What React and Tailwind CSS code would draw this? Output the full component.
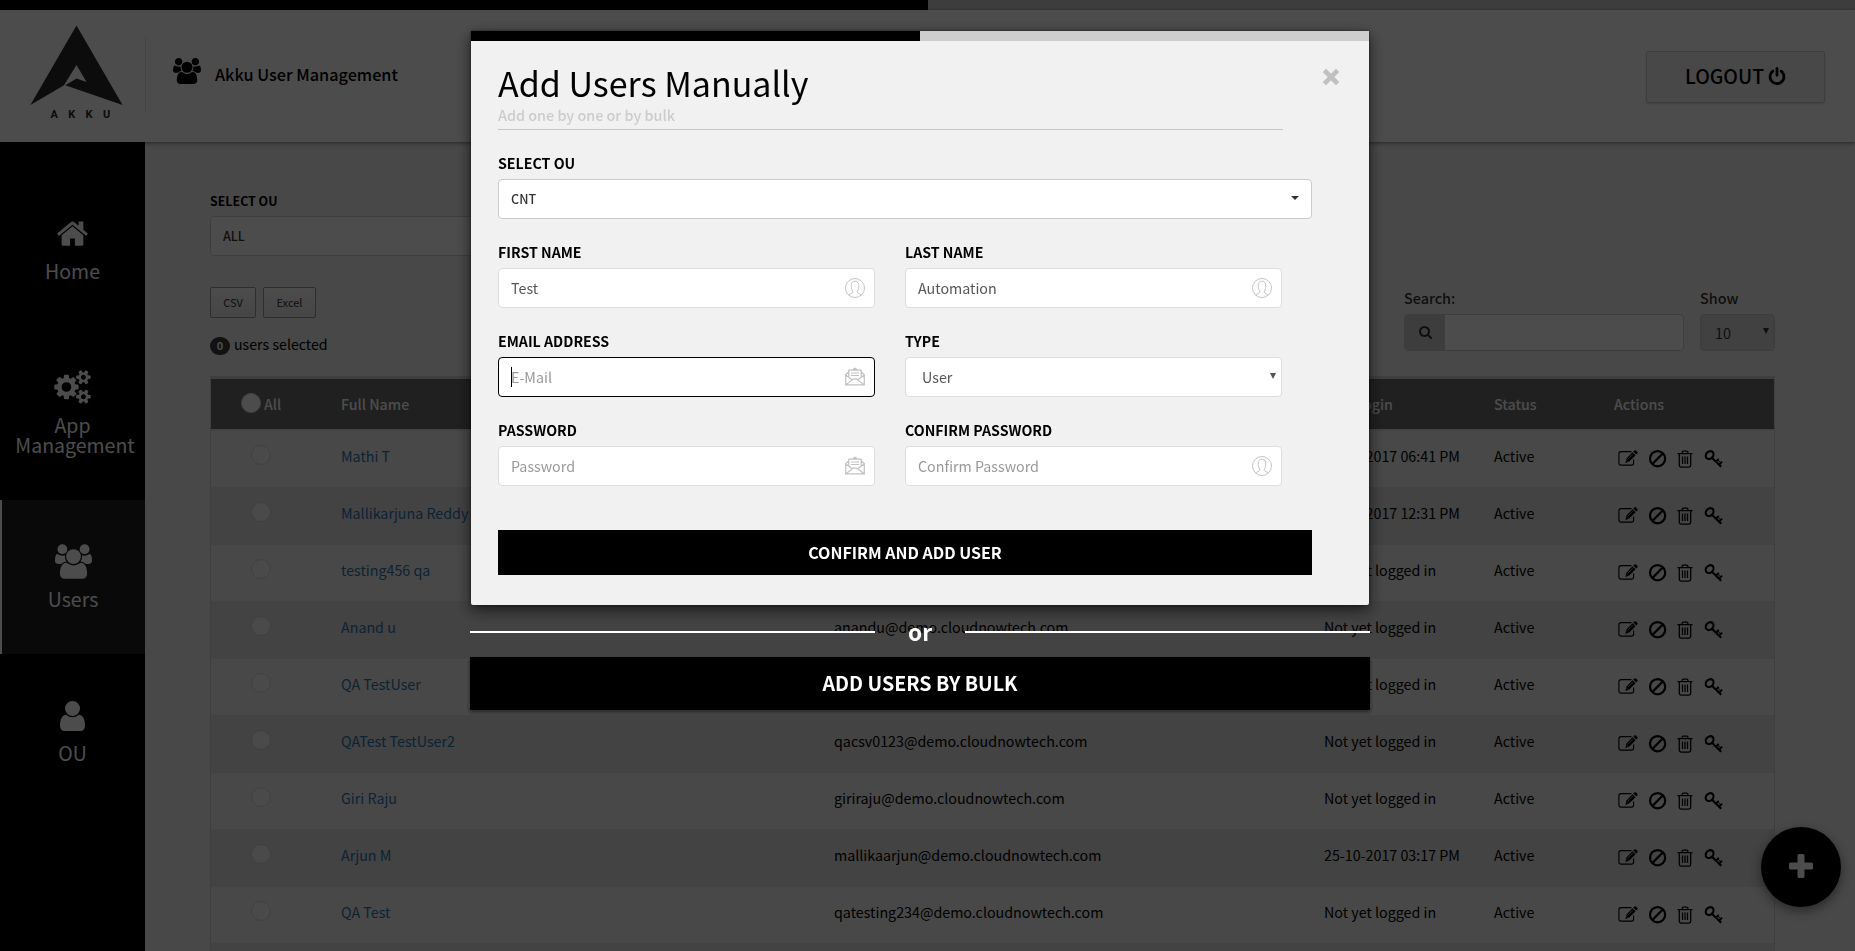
import React from "react";

const ICONS = {
  users: {
    box: "0 0 1920 1792",
    d: "M593 896q-162 5-265 128h-134q-82 0-138-40.5t-56-118.5q0-353 124-353 6 0 43.5 21t97.5 42.5 119 21.5q67 0 133-23-5 37-5 66 0 139 81 256zM1664 1533q0 120-73 189.5t-194 69.5h-874q-121 0-194-69.5t-73-189.5q0-53 3.5-103.5t14-109 26.5-108.5 43-97.5 62-81 85.5-53.5 111.5-20q10 0 43 21.5t73 48 107 48 135 21.5 135-21.5 107-48 73-48 43-21.5q61 0 111.5 20t85.5 53.5 62 81 43 97.5 26.5 108.5 14 109 3.5 103.5zM640 256q0 106-75 181t-181 75-181-75-75-181 75-181 181-75 181 75 75 181zM1344 640q0 159-112.5 271.5t-271.5 112.5-271.5-112.5-112.5-271.5 112.5-271.5 271.5-112.5 271.5 112.5 112.5 271.5zM1920 865q0 78-56 118.5t-138 40.5h-134q-103-123-265-128 81-117 81-256 0-29-5-66 66 23 133 23 59 0 119-21.5t97.5-42.5 43.5-21q124 0 124 353zM1792 256q0 106-75 181t-181 75-181-75-75-181 75-181 181-75 181 75 75 181z",
  },
  home: {
    box: "12 246 1640 1290",
    d: "M1408 992v480q0 26-19 45t-45 19h-384v-384h-256v384h-384q-26 0-45-19t-19-45v-480q0-1 .5-3t.5-3l575-474 575 474q1 2 1 6zm223-69l-62 74q-8 9-21 11h-3q-13 0-21-7l-692-577-692 577q-12 8-24 7-13-2-21-11l-62-74q-8-10-7-23.5t11-21.5l719-599q32-26 76-26t76 26l244 204v-195q0-14 9-23t23-9h192q14 0 23 9t9 23v408l219 182q10 8 11 21.5t-7 23.5z",
  },
  cogs: {
    box: "0 0 1920 1792",
    d: "M896 896q0-106-75-181t-181-75-181 75-75 181 75 181 181 75 181-75 75-181zm768 512q0-52-38-90t-90-38-90 38-38 90q0 53 37.5 90.5t90.5 37.5 90.5-37.5 37.5-90.5zm0-1024q0-52-38-90t-90-38-90 38-38 90q0 53 37.5 90.5t90.5 37.5 90.5-37.5 37.5-90.5zm-384 421v185q0 10-7 19.5t-16 10.5l-155 24q-11 35-32 76 34 48 90 115 7 11 7 20 0 12-7 19-23 30-82.5 89.5t-78.5 59.5q-11 0-21-7l-115-90q-37 19-77 31-11 108-23 155-7 24-30 24h-186q-11 0-20-7.5t-10-17.5l-23-153q-34-10-75-31l-118 89q-7 7-20 7-11 0-21-8-144-133-144-160 0-9 7-19 10-14 41-53t47-61q-23-44-35-82l-152-24q-10-1-17-9.5t-7-19.5v-185q0-10 7-19.5t16-10.5l155-24q11-35 32-76-34-48-90-115-7-11-7-20 0-12 7-20 22-30 82-89t79-59q11 0 21 7l115 90q34-18 77-32 11-108 23-154 7-24 30-24h186q11 0 20 7.5t10 17.5l23 153q34 10 75 31l118-89q8-7 20-7 11 0 21 8 144 133 144 160 0 8-7 19-12 16-42 54t-45 60q23 48 34 82l152 23q10 2 17 10.5t7 19.5zm640 533v140q0 16-149 31-12 27-30 52 51 113 51 138 0 4-4 7-122 71-124 71-8 0-46-47t-52-68q-20 2-30 2t-30-2q-14 21-52 68t-46 47q-2 0-124-71-4-3-4-7 0-25 51-138-18-25-30-52-149-15-149-31v-140q0-16 149-31 13-29 30-52-51-113-51-138 0-4 4-7 4-2 35-20t59-34 30-16q8 0 46 46.5t52 67.5q20-2 30-2t30 2q51-71 92-112l6-2q4 0 124 70 4 3 4 7 0 25-51 138 17 23 30 52 149 15 149 31zm0-1024v140q0 16-149 31-12 27-30 52 51 113 51 138 0 4-4 7-122 71-124 71-8 0-46-47t-52-68q-20 2-30 2t-30-2q-14 21-52 68t-46 47q-2 0-124-71-4-3-4-7 0-25 51-138-18-25-30-52-149-15-149-31v-140q0-16 149-31 13-29 30-52-51-113-51-138 0-4 4-7 4-2 35-20t59-34 30-16q8 0 46 46.5t52 67.5q20-2 30-2t30 2q51-71 92-112l6-2q4 0 124 70 4 3 4 7 0 25-51 138 17 23 30 52 149 15 149 31z",
  },
  user: {
    box: "0 128 1280 1536",
    d: "M1280 1399q0 109-62.5 187t-150.500 78h-854q-88 0-150.500-78t-62.500-187q0-85 8.500-160.500t31.500-152 58.500-131 94-89 134.500-34.500q131 128 313 128t313-128q76 0 134.500 34.500t94 89 58.500 131 31.500 152 8.500 160.500zm-256-887q0 159-112.500 271.500t-271.500 112.500-271.500-112.500-112.500-271.500 112.500-271.500 271.500-112.500 271.500 112.500 112.500 271.500z",
  },
  search: {
    box: "0 128 1664 1664",
    d: "M1152 832q0-185-131.500-316.500t-316.500-131.500-316.500 131.500-131.500 316.500 131.500 316.500 316.500 131.500 316.500-131.500 131.500-316.500zm512 832q0 52-38 90t-90 38q-54 0-90-38l-343-342q-179 124-399 124-143 0-273.500-55.500t-225-150-150-225-55.500-273.500 55.500-273.500 150-225 225-150 273.500-55.500 273.500 55.500 225 150 150 225 55.500 273.500q0 220-124 399l343 343q37 37 37 90z",
  },
  power: {
    box: "0 0 1536 1664",
    d: "M1536 896q0 156-61 298t-164 245-245 164-298 61-298-61-245-164-164-245-61-298q0-182 80.500-343t226.500-270q43-32 95.500-25t83.500 50q32 42 24.500 94.500t-49.500 84.500q-98 74-151.500 181t-53.500 228q0 104 40.500 198.500t109.500 163.500 163.500 109.500 198.500 40.500 198.500-40.500 163.500-109.500 109.500-163.500 40.500-198.500q0-121-53.500-228t-151.500-181q-42-32-49.500-84.500t24.500-94.500q31-43 84-50t95 25q146 109 226.500 270t80.500 343zm-640-768v640q0 52-38 90t-90 38-90-38-38-90v-640q0-52 38-90t90-38 90 38 38 90z",
  },
};

function Glyph({ name, className }) {
  return (
    <svg viewBox={ICONS[name].box} className={className} fill="currentColor" aria-hidden="true">
      <path d={ICONS[name].d} />
    </svg>
  );
}

function Logo() {
  return (
    <svg viewBox="30 25 93 80" className="h-[80px] w-[93px]" fill="#2b2829" aria-hidden="true">
      <path d="M76.5 25.5 L122.6 105 L65.3 85.3 L76.5 78.6 L86.5 82 L76.5 65 L64 85.2 L30.4 105Z" />
    </svg>
  );
}

function RowActions() {
  return (
    <div className="flex gap-[9px] pt-[18px] pl-[3px]">
      <svg viewBox="0 0 22 20" className="h-5 w-[22px]" fill="none" stroke="#000" aria-hidden="true">
        <path d="M14.500 2.600H4.100a2.200 2.200 0 0 0-2.200 2.200v9.100a2.200 2.200 0 0 0 2.200 2.200h10.300a2.200 2.200 0 0 0 2.200-2.200V10.500" strokeWidth="1.100" />
        <path d="M8.400 14l1.100-4.400 6-6.300 3 3-6.200 6.300zM16.200 2.600l1.100-1.100q.8-.7 1.700 0l1.300 1.300q.8.900 0 1.700l-1.100 1.100z" fill="#000" stroke="none" />
        <path d="M10.700 10.300l5-5.200M9.900 11.300l1.200 1.200" stroke="#f1f1f1" strokeWidth=".6" />
      </svg>
      <svg viewBox="0 0 20 20" className="ml-[-1px] h-5 w-5" fill="none" stroke="#000" strokeWidth="2.200" aria-hidden="true">
        <circle cx="10.600" cy="9.700" r="7.600" />
        <path d="M5.200 15.100L16 4.300" />
      </svg>
      <svg viewBox="0 0 16 20" className="ml-px h-5 w-4" fill="none" stroke="#000" strokeWidth="1.250" aria-hidden="true">
        <path d="M.5 4.700h15M5.100 4.400V3.200q0-1.200 1.200-1.200h3.400q1.200 0 1.200 1.200v1.200M2.300 4.700v11.600q0 1.700 1.700 1.700h8q1.700 0 1.700-1.700V4.700M5.500 7.500v7.500M8 7.500v7.500M10.500 7.500v7.500" />
      </svg>
      <svg viewBox="0 0 20 20" className="ml-px h-5 w-5" fill="none" stroke="#000" aria-hidden="true">
        <ellipse cx="6.600" cy="6.100" rx="3.500" ry="4.300" transform="rotate(42 6.600 6.100)" strokeWidth="2.100" />
        <path d="M9.200 9l9 8.700" strokeWidth="2.200" />
        <path d="M13.200 12.500l2.500-2.600M16.300 15.400l2.800-2.800" strokeWidth="2" />
        <path d="M14.500 10.700l3 3" strokeWidth="1" />
      </svg>
    </div>
  );
}

function PersonBadge() {
  return (
    <svg viewBox="0 0 20 20" className="h-5 w-5" fill="none" stroke="#c4c4c4" strokeWidth="1" aria-hidden="true">
      <circle cx="10" cy="10" r="9.500" />
      <path d="M3.700 17c1.200-1.300 3.700-1.400 4-2.700.3-1.600-1.500-2.300-1.500-6 0-3 1-5.200 3.800-5.200s3.800 2.200 3.800 5.200c0 3.700-1.800 4.400-1.500 6 .3 1.300 2.800 1.400 4 2.700" />
    </svg>
  );
}

function OpenMail() {
  return (
    <svg viewBox="0 0 20 20" className="h-5 w-5" fill="none" stroke="#c2c2c2" strokeWidth="1.200" aria-hidden="true">
      <path d="M3.800 5L.7 7.600v10.300h18.600V7.600L16.200 5M3.800 10.500V3.200h12.400v7.300M7.600 3L10 1.200 12.400 3M.8 8l6.500 4.700M19.200 8l-6.500 4.700M1 17.700l7.200-5.600h3.600l7.200 5.600" />
      <path d="M6 6h8M6 8.500h8" />
    </svg>
  );
}

function NavItem({ icon, iconClass, lines, active, tall }) {
  return (
    <a
      className={`flex flex-col items-center ${tall ? "h-[174px]" : "h-[154px]"} ${
        active ? "border-l-2 border-white bg-[#1e1e1e] pr-px" : ""
      }`}
    >
      <span className="flex h-[90px] items-center pt-8">
        <Glyph name={icon} className={iconClass} />
      </span>
      <span className="mt-[-1px] text-center text-[19.5px] leading-5">
        {lines.map((l) => (
          <span key={l} className={`block ${l.length > 8 ? "pl-[5px]" : ""}`}>{l}</span>
        ))}
      </span>
    </a>
  );
}

const USERS = [
  { name: "Mathi T", email: "", login: "25-10-2017 06:41 PM" },
  { name: "Mallikarjuna Reddy", email: "", login: "25-10-2017 12:31 PM" },
  { name: "testing456 qa", email: "", login: "Not yet logged in" },
  { name: "Anand u", email: "anandu@demo.cloudnowtech.com", login: "Not yet logged in" },
  { name: "QA TestUser", email: "", login: "Not yet logged in" },
  { name: "QATest TestUser2", email: "qacsv0123@demo.cloudnowtech.com", login: "Not yet logged in" },
  { name: "Giri Raju", email: "giriraju@demo.cloudnowtech.com", login: "Not yet logged in" },
  { name: "Arjun M", email: "mallikaarjun@demo.cloudnowtech.com", login: "25-10-2017 03:17 PM" },
  { name: "QA Test", email: "qatesting234@demo.cloudnowtech.com", login: "Not yet logged in" },
  { name: "", email: "", login: "" },
];

function Header() {
  return (
    <header className="relative z-10 flex h-[132px] shrink-0 bg-white shadow-[0_1px_4px_rgba(0,0,0,0.5)]">
      <div className="flex w-[145px] flex-col items-center pt-[15px] pl-[8px]">
        <Logo />
        <span className="mt-[4px] pl-[18px] font-[Roboto] text-[11px] leading-3 font-bold tracking-[10.4px] text-[#2b2829]">AKKU</span>
      </div>
      <div className="mt-[27px] h-[76px] w-px bg-[#e4e4e4]" />
      <div className="flex h-[90px] items-center pl-[27px]">
        <Glyph name="users" className="mt-[32px] h-[26px] w-[28px]" />
        <h1 className="mt-[37px] ml-[14px] text-[16.240px] leading-5 font-medium">Akku User Management</h1>
      </div>
      <button className="mt-[41px] mr-[30px] ml-auto flex h-[52px] w-[179px] items-center justify-center gap-1 rounded-[3px] border border-[#ccc] bg-[#f1f1f1] pb-0.5 text-[19.4px] font-medium shadow-[0_1px_2px_rgba(0,0,0,0.15)]">
        LOGOUT
        <Glyph name="power" className="h-[18px] w-[18px]" />
      </button>
    </header>
  );
}

function Sidebar() {
  return (
    <nav className="w-[145px] shrink-0 bg-black pt-[30px] text-white">
      <NavItem icon="home" iconClass="h-[25px] w-[31px]" lines={["Home"]} />
      <NavItem icon="cogs" iconClass="h-[34px] w-[37px]" lines={["App", "Management"]} tall />
      <NavItem icon="users" iconClass="h-[35px] w-[37px]" lines={["Users"]} active />
      <NavItem icon="user" iconClass="h-[30px] w-[25px] mt-0.5" lines={["OU"]} />
    </nav>
  );
}

const COLS = "grid grid-cols-[130px_493px_490px_170px_120px_1fr]";

function UsersTable() {
  return (
    <div className="border-x border-t-[3px] border-[#d2d2d2]">
      <div className={`${COLS} h-[50px] bg-[#6c6c6c] text-[14.2px] leading-5 font-medium text-white`}>
        <div className="flex pl-[30px]">
          <span className="mt-[14px] h-5 w-5 rounded-full border border-[#ddd] bg-white" />
          <span className="mt-[15px] ml-[3px]">All</span>
        </div>
        <div className="pt-[15px]">Full Name</div>
        <div className="pt-[15px]">Email</div>
        <div className="pt-[15px]">Last Login</div>
        <div className="pt-[15px]">Status</div>
        <div className="pt-[15px]">Actions</div>
      </div>
      <div className="h-px bg-[#ddd]" />
      {USERS.map((u, i) => (
        <div
          key={i}
          className={`${COLS} h-[57px] border-t border-[#dfdfdf] text-[14.280px] leading-5 ${i % 2 ? "bg-[#dfdfdf]" : "bg-[#f1f1f1]"}`}
        >
          <div className="pt-[14px] pl-10">
            <div className="h-5 w-5 rounded-full border border-[#d5d5d5] bg-[#f8f8f8]" />
          </div>
          <div className="pt-[15px] text-[#2d75b0]">{u.name}</div>
          <div className="pt-[15px]">{u.email}</div>
          <div className="pt-[15px]">{u.login}</div>
          <div className="pt-[15px]">{u.name && "Active"}</div>
          <RowActions />
        </div>
      ))}
    </div>
  );
}

function Arrow() {
  return (
    <svg viewBox="0 0 6 6" className="h-1.5 w-1.5" fill="currentColor" aria-hidden="true">
      <path d="M0 0h6L3 6z" />
    </svg>
  );
}

function Content() {
  return (
    <main className="min-w-0 flex-1 overflow-hidden bg-[#f1f1f1] pt-[50px] pr-[80px] pl-[65px]">
      <div className="text-[12.4px] leading-[18px] font-bold">SELECT OU</div>
      <div className="mt-1.5 flex h-10 w-[500px] items-center rounded border border-[#ccc] bg-white pl-3 text-[12.6px] font-medium text-[#333]">
        <span className="mt-px">ALL</span>
      </div>
      <div className="mt-[31px] flex h-[89px] justify-between">
        <div>
          <div className="flex gap-[7px] text-[11px] text-[#333]">
            <button className="h-[31px] w-[46px] rounded-[2px] border border-[#999] bg-gradient-to-b from-white to-[#e9e9e9]">CSV</button>
            <button className="h-[31px] w-[53px] rounded-[2px] border border-[#999] bg-gradient-to-b from-white to-[#e9e9e9]">Excel</button>
          </div>
          <div className="mt-4 flex text-[14.2px] leading-5">
            <span className="mt-[3px] mr-1 flex h-[18px] w-5 items-center justify-center rounded-full bg-[#3c3c3c] pb-0.5 text-[11px] leading-4 font-bold text-white">0</span>
            users selected
          </div>
        </div>
        <div className="flex gap-4 text-[14.4px] text-[#333]">
          <div className="w-[280px]">
            <div className="mt-px leading-5 font-medium">Search:</div>
            <div className="mt-1.5 flex h-[37px] rounded border border-[#ccc] bg-white">
              <div className="flex w-10 items-center justify-center rounded-l-[3px] bg-[#ccc]">
                <Glyph name="search" className="h-[13px] w-[13px]" />
              </div>
            </div>
          </div>
          <div className="w-[75px]">
            <div className="mt-px leading-5 font-medium">Show</div>
            <div className="mt-1.5 flex h-[37px] items-center justify-between rounded border border-[#ccc] bg-[#dadada] pr-[5px] pl-[14px]">
              <span className="mt-px">10</span>
              <span className="mb-1"><Arrow /></span>
            </div>
          </div>
        </div>
      </div>
      <UsersTable />
    </main>
  );
}

function Field({ label, value, placeholder, icon, focused, select }) {
  return (
    <div>
      <div className="text-[14.2px] leading-5 font-bold">{label}</div>
      <div
        className={`mt-1.5 flex h-10 items-center justify-between rounded border bg-white text-[14.280px] leading-5 ${
          focused ? "border-black" : "border-[#ddd]"
        } ${select ? "pr-[5px] pl-4" : "pr-[9px] pl-3"} ${value ? "text-[#555]" : "text-[#999]"}`}
      >
        <span className="flex items-center">
          {focused && <span className="mr-[-1px] h-5 w-px bg-black" />}
          <span>{value || placeholder}</span>
        </span>
        {select ? <span className="mb-0.5"><Arrow /></span> : icon}
      </div>
    </div>
  );
}

function AddUserDialog() {
  return (
    <div className="fixed inset-0 z-30 flex flex-col items-center bg-black/70 pt-[31px] pr-[15px]">
      <section className="h-[574px] w-[898px] rounded-b-[2px] bg-[#f1f1f1] shadow-[0_5px_15px_rgba(0,0,0,0.65),0_0_3px_rgba(0,0,0,0.5)]">
        <div className="h-[10px] bg-[#cecece]">
          <div className="h-full w-1/2 bg-black" />
        </div>
        <div className="pt-[22px] pl-[27px]">
          <div className="flex">
            <div className="w-[785px] border-b border-[#c6c6c6] pb-1">
              <h2 className="text-[34px] leading-10">Add Users Manually</h2>
              <p className="mt-[2px] text-[14.360px] leading-5 font-medium text-[#ccc]">Add one by one or by bulk</p>
            </div>
            <svg viewBox="0 0 18 18" className="mt-[5px] ml-[39px] h-[18px] w-[18px]" stroke="#c0c0c0" strokeWidth="4.600" strokeLinecap="square" aria-hidden="true">
              <path d="M4 4l10 10M14 4L4 14" />
            </svg>
          </div>
          <div className="mt-[23px] w-[814px]">
            <div className="text-[14.2px] leading-5 font-bold">SELECT OU</div>
            <div className="mt-1.5 flex h-10 items-center justify-between rounded border border-[#ccc] bg-white pr-3 pl-3 text-[12.6px] font-medium text-[#333]">
              CNT
              <svg viewBox="0 0 8 4" className="mb-0.5 h-1 w-2" fill="#333" aria-hidden="true">
                <path d="M0 0h8L4 4z" />
              </svg>
            </div>
          </div>
          <div className="mt-[23px] grid grid-cols-[377px_377px] gap-x-[30px] gap-y-[23px]">
            <Field label="FIRST NAME" value="Test" icon={<PersonBadge />} />
            <Field label="LAST NAME" value="Automation" icon={<PersonBadge />} />
            <Field label="EMAIL ADDRESS" placeholder="E-Mail" icon={<OpenMail />} focused />
            <Field label="TYPE" value="User" select />
            <Field label="PASSWORD" placeholder="Password" icon={<OpenMail />} />
            <Field label="CONFIRM PASSWORD" placeholder="Confirm Password" icon={<PersonBadge />} />
          </div>
          <button className="mt-11 h-[45px] w-[814px] bg-black pb-0.5 text-[16px] leading-5 font-bold text-white">CONFIRM AND ADD USER</button>
        </div>
      </section>
      <div className="mt-[17px] flex h-5 w-[900px] items-center text-white">
        <span className="h-0.5 flex-1 bg-white" />
        <span className="mt-[-1px] w-[90px] text-center text-[22.6px] leading-5 font-bold">or</span>
        <span className="h-0.5 flex-1 bg-white" />
      </div>
      <button className="mt-[15px] h-[53px] w-[900px] bg-black pb-0.5 text-[19.6px] leading-6 font-bold text-white shadow-[0_2px_4px_rgba(0,0,0,0.5)]">
        ADD USERS BY BULK
      </button>
    </div>
  );
}

export default function App() {
  return (
    <div className="relative flex h-[951px] w-full flex-col overflow-hidden font-['Noto_Sans_CJK_SC',sans-serif] text-black">
      <div className="h-[10px] shrink-0 bg-[#cecece]">
        <div className="h-full w-[928px] bg-black" />
      </div>
      <Header />
      <div className="flex min-h-0 flex-1">
        <Sidebar />
        <Content />
      </div>
      <button className="absolute right-[14px] bottom-11 z-20 flex h-20 w-20 items-center justify-center rounded-full bg-black shadow-[0_4px_12px_rgba(0,0,0,0.45)]">
        <svg viewBox="0 0 24 24" className="mb-0.5 h-6 w-6" fill="#fff" aria-hidden="true">
          <path d="M10 0h4q1.500 0 1.500 1.500v7h7q1.500 0 1.500 1.500v4q0 1.500-1.500 1.500h-7v7q0 1.500-1.500 1.500h-4q-1.500 0-1.500-1.500v-7h-7Q0 15.500 0 14v-4q0-1.500 1.500-1.500h7v-7Q8.500 0 10 0z" />
        </svg>
      </button>
      <AddUserDialog />
    </div>
  );
}
